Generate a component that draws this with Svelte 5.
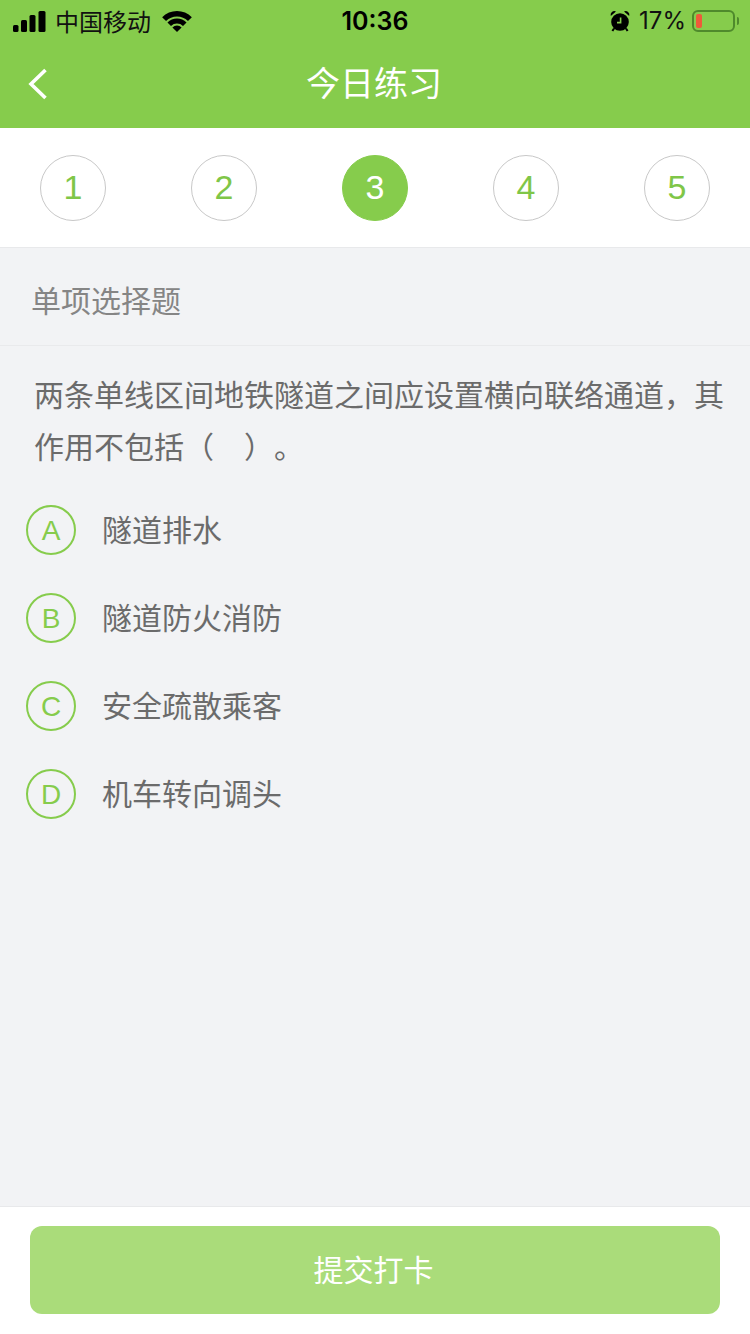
<script>
  const steps = [1, 2, 3, 4, 5];
  let current = 3;

  const options = [
    { key: 'A', text: '隧道排水' },
    { key: 'B', text: '隧道防火消防' },
    { key: 'C', text: '安全疏散乘客' },
    { key: 'D', text: '机车转向调头' }
  ];
</script>

<div class="page">
  <header class="top">
    <div class="status">
      <div class="status-left">
        <svg class="signal" width="33" height="21" viewBox="0 0 33 21">
          <rect x="0" y="14" width="5.5" height="7" rx="1.5" />
          <rect x="8" y="9" width="6" height="12" rx="1.5" />
          <rect x="16.5" y="4" width="6" height="17" rx="1.5" />
          <rect x="25.5" y="0" width="7" height="21" rx="1.5" />
        </svg>
        <span class="carrier">中国移动</span>
        <svg class="wifi" width="30" height="22" viewBox="0 0 30 22">
          <path d="M0.15 7.15 A21 21 0 0 1 29.85 7.15 L25.96 11.04 A15.5 15.5 0 0 0 4.04 11.04 Z" />
          <path d="M5.45 12.45 A13.5 13.5 0 0 1 24.55 12.45 L21.01 15.99 A8.5 8.5 0 0 0 8.99 15.99 Z" />
          <path d="M10.4 17.4 A6.5 6.5 0 0 1 19.6 17.4 L15 22 Z" />
        </svg>
      </div>
      <div class="time">10:36</div>
      <div class="status-right">
        <svg class="alarm" width="20" height="22" viewBox="0 0 20 22">
          <circle cx="10" cy="12" r="8.8" />
          <path d="M0.8 6 A3.8 3.8 0 0 1 6 1.4 Z M19.2 6 A3.8 3.8 0 0 0 14 1.4 Z" />
          <path d="M4 18.5 L2.4 21 M16 18.5 L17.6 21" class="alarm-line" />
          <path d="M10.6 7.5 V12.6 H7" class="alarm-hand" />
        </svg>
        <span class="percent">17%</span>
        <div class="battery">
          <div class="battery-level"></div>
        </div>
        <div class="battery-cap"></div>
      </div>
    </div>
    <div class="nav">
      <svg class="back" width="20" height="32" viewBox="0 0 20 32">
        <path d="M17.5 2 L3 16 L17.5 30" />
      </svg>
      <h1>今日练习</h1>
    </div>
  </header>

  <div class="steps">
    {#each steps as step}
      <div class="step" class:active={step === current}>{step}</div>
    {/each}
  </div>

  <main class="content">
    <div class="section-title">单项选择题</div>
    <p class="question">两条单线区间地铁隧道之间应设置横向联络通道，其作用不包括（　）。</p>
    <ul class="options">
      {#each options as option}
        <li class="option">
          <span class="letter">{option.key}</span>
          <span class="option-text">{option.text}</span>
        </li>
      {/each}
    </ul>
  </main>

  <footer class="footer">
    <button class="submit" type="button">提交打卡</button>
  </footer>
</div>

<style>
  :global(body) {
    margin: 0;
  }

  .page {
    width: 750px;
    height: 1334px;
    display: flex;
    flex-direction: column;
    background: #f2f3f5;
    font-family: "Noto Sans CJK SC", "Liberation Sans", sans-serif;
    overflow: hidden;
  }

  .top {
    background: #86cc4c;
    height: 128px;
    flex: none;
  }

  .status {
    height: 40px;
    display: grid;
    grid-template-columns: 1fr auto 1fr;
    align-items: center;
    color: #000;
  }

  .status-left {
    display: flex;
    align-items: center;
    padding-left: 13px;
  }

  .signal {
    fill: #000;
    margin-right: 9px;
  }

  .carrier {
    line-height: 40px;
    width: 107px;
    font-size: 24px;
    color: #111;
  }

  .wifi {
    fill: #000;
  }

  .time {
    font-family: Inter, "Liberation Sans", sans-serif;
    font-size: 25px;
    font-weight: 600;
    line-height: 42px;
  }

  .status-right {
    display: flex;
    align-items: center;
    justify-content: flex-end;
    padding-right: 11px;
  }

  .alarm {
    fill: #000;
    margin-right: 9px;
  }

  .alarm-line {
    stroke: #000;
    stroke-width: 2;
    fill: none;
  }

  .alarm-hand {
    stroke: #86cc4c;
    stroke-width: 1.6;
    fill: none;
  }

  .percent {
    font-family: Inter, "Liberation Sans", sans-serif;
    font-size: 24px;
    line-height: 42px;
    margin-right: 6px;
    color: #111;
  }

  .battery {
    width: 35px;
    height: 14px;
    border: 2px solid #4f8a2c;
    border-radius: 6px;
    padding: 2px;
    display: flex;
  }

  .battery-level {
    width: 6px;
    background: #ee5a3a;
    border-radius: 2px;
  }

  .battery-cap {
    width: 2px;
    height: 8px;
    margin-left: 2px;
    background: #4f8a2c;
    border-radius: 0 2px 2px 0;
  }

  .nav {
    position: relative;
    height: 88px;
    display: flex;
    align-items: center;
    justify-content: center;
  }

  .back {
    position: absolute;
    left: 28px;
    top: 28px;
    fill: none;
    stroke: #fff;
    stroke-width: 3.6;
  }

  h1 {
    margin: 0;
    color: #fff;
    font-size: 34px;
    font-weight: 400;
    line-height: 84px;
    padding: 0 2px 4px 0;
  }

  .steps {
    flex: none;
    height: 119px;
    padding: 0 40px;
    display: flex;
    align-items: center;
    justify-content: space-between;
    background: #fff;
    border-bottom: 1px solid #e8e9eb;
  }

  .step {
    width: 66px;
    height: 66px;
    box-sizing: border-box;
    border: 1px solid #c8c8c8;
    border-radius: 50%;
    display: flex;
    align-items: center;
    justify-content: center;
    color: #7fc648;
    font-family: "Liberation Sans", sans-serif;
    font-size: 34px;
  }

  .step.active {
    background: #86cc4c;
    border-color: #86cc4c;
    color: #fff;
  }

  .content {
    flex: 1;
  }

  .section-title {
    height: 98px;
    line-height: 103px;
    box-sizing: border-box;
    padding-left: 31px;
    color: #858585;
    font-size: 30px;
    border-bottom: 1px solid #e9eaec;
  }

  .question {
    margin: 21px 0 0;
    padding: 0 20px 0 34px;
    color: #6b6b6b;
    font-size: 30px;
    line-height: 52px;
    text-spacing-trim: space-all;
  }

  .options {
    list-style: none;
    margin: 15px 0 0;
    padding: 0 0 0 26px;
  }

  .option {
    height: 88px;
    display: flex;
    align-items: center;
  }

  .letter {
    width: 50px;
    height: 50px;
    padding-top: 2px;
    box-sizing: border-box;
    border: 2px solid #86cc4c;
    border-radius: 50%;
    display: flex;
    align-items: center;
    justify-content: center;
    color: #86cc4c;
    font-family: "Liberation Sans", sans-serif;
    font-size: 28px;
  }

  .option-text {
    margin-left: 26px;
    padding-bottom: 4px;
    color: #6b6b6b;
    font-size: 30px;
  }

  .footer {
    flex: none;
    height: 128px;
    padding: 19px 30px 0;
    box-sizing: border-box;
    background: #fff;
    border-top: 1px solid #e8e9eb;
  }

  .submit {
    display: block;
    width: 100%;
    height: 88px;
    padding: 0 3px 4px 0;
    border: none;
    border-radius: 12px;
    background: #aadc7a;
    color: #fff;
    font-family: inherit;
    font-size: 30px;
  }
</style>
